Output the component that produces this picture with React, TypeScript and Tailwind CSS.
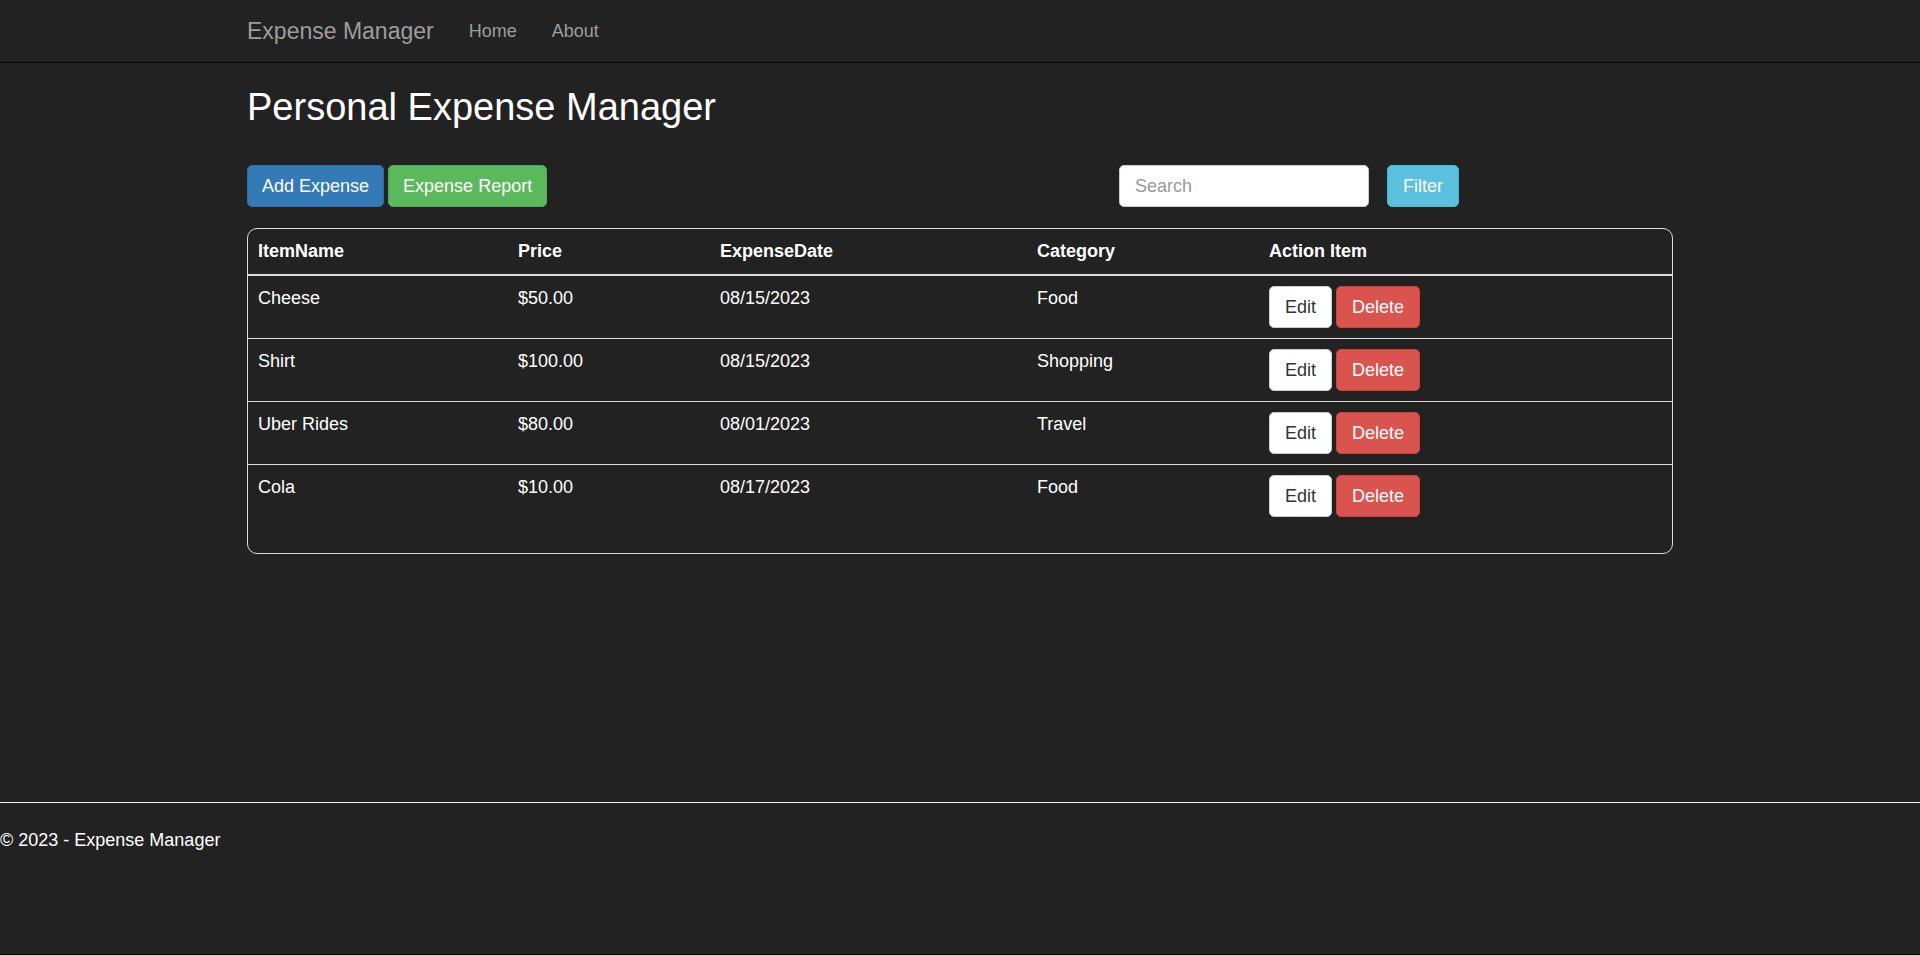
const expenses = [
  { name: "Cheese", price: "$50.00", date: "08/15/2023", category: "Food" },
  { name: "Shirt", price: "$100.00", date: "08/15/2023", category: "Shopping" },
  { name: "Uber Rides", price: "$80.00", date: "08/01/2023", category: "Travel" },
  { name: "Cola", price: "$10.00", date: "08/17/2023", category: "Food" },
];

const button = "h-[42px] rounded-[5px] border leading-none cursor-pointer";

function NavBar() {
  return (
    <nav className="border-b border-[#080808] bg-[#222]">
      <div className="mx-auto flex h-[62px] max-w-[1426px] items-center text-[#9d9d9d]">
        <a href="#" className="mr-[35px] text-[23px]">Expense Manager</a>
        <a href="#home" className="mr-[35px]">Home</a>
        <a href="#about">About</a>
      </div>
    </nav>
  );
}

function Toolbar() {
  return (
    <div className="flex items-center gap-1">
      <button type="button" className={`${button} border-[#2e6da4] bg-[#337ab7] px-[14px] text-white`}>Add Expense</button>
      <button type="button" className={`${button} border-[#4cae4c] bg-[#5cb85c] px-[14px] text-white`}>Expense Report</button>
      <form className="ml-auto flex w-[554px] gap-[18px]" onSubmit={(event) => event.preventDefault()}>
        <input
          type="search"
          aria-label="Search"
          placeholder="Search"
          className="h-[42px] w-[250px] rounded-[5px] border border-[#ccc] bg-white px-[15px] text-[#555] placeholder:text-[#999]"
        />
        <button type="submit" className={`${button} border-[#46b8da] bg-[#5bc0de] px-[15px] text-white`}>Filter</button>
      </form>
    </div>
  );
}

function ExpenseTable() {
  return (
    <div className="mt-[21px] rounded-[10px] border border-[#ddd]">
      <table className="mb-[26px] w-full table-fixed border-separate border-spacing-0 text-left">
        <thead>
          <tr className="[&>th]:border-b-2 [&>th]:border-[#ddd] [&>th]:p-[10px]">
            <th className="w-[260px]">ItemName</th>
            <th className="w-[202px]">Price</th>
            <th className="w-[317px]">ExpenseDate</th>
            <th className="w-[232px]">Category</th>
            <th>Action Item</th>
          </tr>
        </thead>
        <tbody>
          {expenses.map((expense) => (
            <tr
              key={expense.name}
              className="align-top [&>td]:border-b [&>td]:border-[#ddd] [&>td]:p-[10px] last:[&>td]:border-b-0"
            >
              <td>{expense.name}</td>
              <td>{expense.price}</td>
              <td>{expense.date}</td>
              <td>{expense.category}</td>
              <td>
                <div className="flex gap-1">
                  <button type="button" className={`${button} border-[#ccc] bg-white px-[15px] text-[#333]`}>Edit</button>
                  <button type="button" className={`${button} border-[#d43f3a] bg-[#d9534f] px-[15px] text-white`}>Delete</button>
                </div>
              </td>
            </tr>
          ))}
        </tbody>
      </table>
    </div>
  );
}

export default function App() {
  return (
    <div className="flex min-h-screen flex-col border-b border-black bg-[#222] font-['Liberation_Sans',Arial,sans-serif] text-[18px] leading-[25px] text-white">
      <NavBar />
      <main className="mx-auto w-full max-w-[1426px] grow">
        <h2 className="mt-6 mb-[37px] text-[38px] leading-[41px] font-medium">Personal Expense Manager</h2>
        <Toolbar />
        <ExpenseTable />
      </main>
      <footer className="h-[152px] border-t border-[#eee] pt-[25px]">
        <p>© 2023 - Expense Manager</p>
      </footer>
    </div>
  );
}
